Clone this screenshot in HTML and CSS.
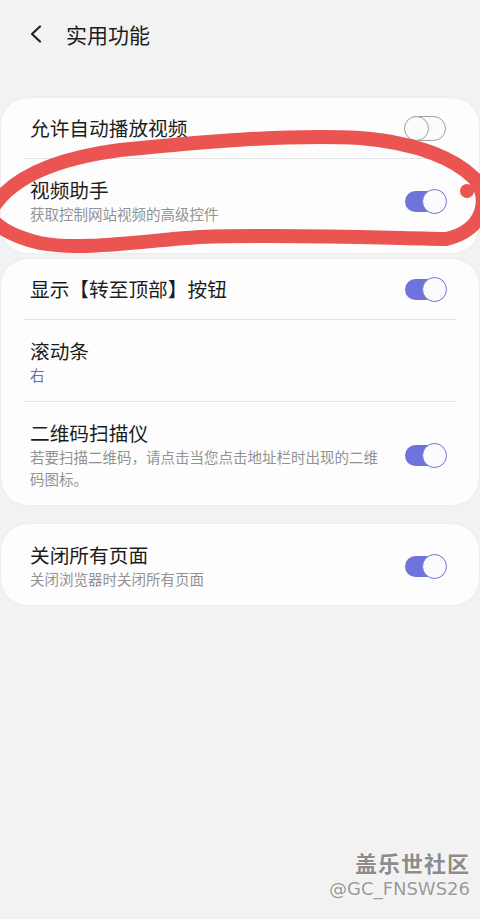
FILE: index.html
```html
<!DOCTYPE html>
<html lang="zh-CN">
<head>
  <meta charset="UTF-8" />
  <title>实用功能</title>
  <link rel="stylesheet" href="styles.css">
</head>
<body>
  <header class="topbar">
    <svg class="back" width="14" height="18" viewBox="0 0 14 18">
      <path d="M11 1.5 L3 9 L11 16.5" fill="none" stroke="#222" stroke-width="2.2" stroke-linecap="round" stroke-linejoin="round"/>
    </svg>
    <h1>实用功能</h1>
  </header>

  <section class="card card-first">
    <div class="row">
      <div class="text"><div class="title">允许自动播放视频</div></div>
      <span class="switch off"></span>
    </div>
    <div class="divider"></div>
    <div class="row sub-row">
      <div class="text">
        <div class="title">视频助手</div>
        <div class="sub">获取控制网站视频的高级控件</div>
      </div>
      <span class="switch on"></span>
    </div>
  </section>

  <section class="card">
    <div class="row">
      <div class="text"><div class="title">显示【转至顶部】按钮</div></div>
      <span class="switch on"></span>
    </div>
    <div class="divider"></div>
    <div class="row sub-row">
      <div class="text">
        <div class="title">滚动条</div>
        <div class="sub value">右</div>
      </div>
    </div>
    <div class="divider"></div>
    <div class="row sub-row">
      <div class="text">
        <div class="title">二维码扫描仪</div>
        <div class="sub">若要扫描二维码，请点击当您点击地址栏时出现的二维码图标。</div>
      </div>
      <span class="switch on"></span>
    </div>
  </section>

  <section class="card card-last">
    <div class="row sub-row">
      <div class="text">
        <div class="title">关闭所有页面</div>
        <div class="sub">关闭浏览器时关闭所有页面</div>
      </div>
      <span class="switch on"></span>
    </div>
  </section>

  <!-- hand drawn mark over the second row -->
  <svg class="scribble" width="480" height="140" viewBox="0 120 480 140">
    <path d="M-6 206 C 14 176, 60 158, 120 150 C 200 142, 290 134, 360 138 C 420 143, 456 160, 474 178 C 490 196, 486 230, 446 239 C 380 238, 300 234, 200 237 C 140 241, 80 251, 40 243 C 15 237, 0 229, -8 219"
          fill="none" stroke="#ea5552" stroke-width="14" stroke-linecap="round"/>
    <circle cx="467" cy="191" r="7" fill="#ea5552"/>
  </svg>

  <div class="watermark">
    <div class="wm-name">盖乐世社区</div>
    <div class="wm-id">@GC_FNSWS26</div>
  </div>
</body>
</html>
```

FILE: styles.css
```css
body {
  margin: 0;
  height: 919px;
  position: relative;
  overflow: hidden;
  background: #f2f2f2;
  font-family: "Noto Sans CJK SC", "Noto Sans", sans-serif;
  color: #1c1c1c;
}
.topbar {
  height: 68px;
  display: flex;
  align-items: center;
  padding-left: 29px;
}
.topbar .back {
  margin-right: 23px;
  margin-top: -1px;
}
.topbar h1 {
  margin: 0;
  font-size: 21px;
  font-weight: normal;
}
.card {
  background: #fdfdfd;
  margin: 0 1px 6px;
  border-radius: 26px;
  box-shadow: 0 0 1px rgba(0,0,0,0.18);
}
.card-first {
  margin-top: 30px;
  padding-bottom: 13px;
}
.card-last {
  margin-top: 19px;
}
.row {
  display: flex;
  align-items: center;
  min-height: 60px;
  padding: 0 32px 0 29px;
}
.row.sub-row {
  padding-top: 18px;
  padding-bottom: 15px;
  min-height: 0;
}
.text {
  flex: 1;
}
.title {
  font-size: 19.7px;
  line-height: 26px;
}
.sub {
  font-size: 14.5px;
  line-height: 22px;
  color: #929292;
  padding-right: 24px;
}
.sub.value {
  color: #676ca8;
}
.divider {
  height: 1px;
  background: #e5e5e5;
  margin: 0 23px;
}
.switch {
  position: relative;
  width: 43px;
  height: 25px;
  flex: none;
}
.switch::before {
  content: "";
  position: absolute;
  left: 1px;
  right: 1px;
  top: 2px;
  bottom: 2px;
  border-radius: 11px;
  box-sizing: border-box;
}
.switch::after {
  content: "";
  position: absolute;
  top: 0;
  width: 25px;
  height: 25px;
  border-radius: 50%;
  box-sizing: border-box;
  background: #fbfbfd;
}
.switch.on::before {
  background: #6e74dc;
}
.switch.on::after {
  right: 0;
  border: 1.5px solid #6e74dc;
}
.switch.off::before {
  background: #fbfbfb;
  border: 1.5px solid #a0a0a0;
  top: 0;
  bottom: 0;
  border-radius: 13px;
}
.switch.off::after {
  left: 0;
  border: 1.5px solid #a0a0a0;
}
.scribble {
  position: absolute;
  left: 0;
  top: 120px;
}
.watermark {
  position: absolute;
  right: 10px;
  bottom: 18px;
  text-align: right;
  color: #8c8c8c;
  text-shadow: 0 0 2px #fff;
}
.wm-name {
  font-size: 22px;
  font-weight: bold;
  line-height: 30px;
  letter-spacing: 1px;
}
.wm-id {
  font-family: "DejaVu Sans", sans-serif;
  font-size: 18px;
  line-height: 24px;
  color: #9a9a9a;
}
```
